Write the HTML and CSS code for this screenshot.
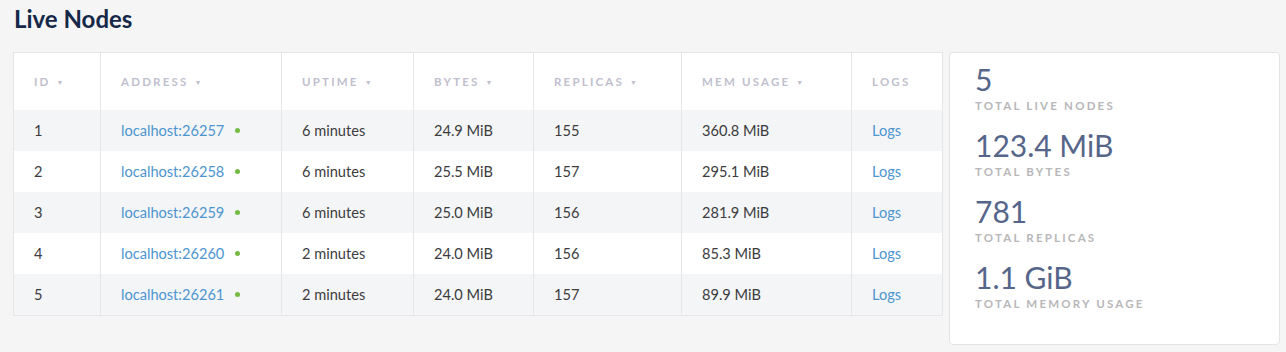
FILE: index.html
```html
<!DOCTYPE html>
<html>
<head>
<meta charset="utf-8">
<link rel="stylesheet" href="styles.css">
</head>
<body>
<div class="page">
  <h1 class="title">Live Nodes</h1>
  <div class="content">
    <table class="nodes">
      <thead>
        <tr>
          <th class="c-id">ID <span class="arrow">▼</span></th>
          <th class="c-addr">Address <span class="arrow">▼</span></th>
          <th class="c-up">Uptime <span class="arrow">▼</span></th>
          <th class="c-bytes">Bytes <span class="arrow">▼</span></th>
          <th class="c-rep">Replicas <span class="arrow">▼</span></th>
          <th class="c-mem">Mem Usage <span class="arrow">▼</span></th>
          <th class="c-logs">Logs</th>
        </tr>
      </thead>
      <tbody>
        <tr class="odd"><td>1</td><td><a class="link">localhost:26257</a><span class="dot"></span></td><td>6 minutes</td><td>24.9 MiB</td><td>155</td><td>360.8 MiB</td><td><a class="link">Logs</a></td></tr>
        <tr><td>2</td><td><a class="link">localhost:26258</a><span class="dot"></span></td><td>6 minutes</td><td>25.5 MiB</td><td>157</td><td>295.1 MiB</td><td><a class="link">Logs</a></td></tr>
        <tr class="odd"><td>3</td><td><a class="link">localhost:26259</a><span class="dot"></span></td><td>6 minutes</td><td>25.0 MiB</td><td>156</td><td>281.9 MiB</td><td><a class="link">Logs</a></td></tr>
        <tr><td>4</td><td><a class="link">localhost:26260</a><span class="dot"></span></td><td>2 minutes</td><td>24.0 MiB</td><td>156</td><td>85.3 MiB</td><td><a class="link">Logs</a></td></tr>
        <tr class="odd"><td>5</td><td><a class="link">localhost:26261</a><span class="dot"></span></td><td>2 minutes</td><td>24.0 MiB</td><td>157</td><td>89.9 MiB</td><td><a class="link">Logs</a></td></tr>
      </tbody>
    </table>
    <div class="summary">
      <div class="stat"><div class="value">5</div><div class="label">Total Live Nodes</div></div>
      <div class="stat"><div class="value">123.4 MiB</div><div class="label">Total Bytes</div></div>
      <div class="stat"><div class="value">781</div><div class="label">Total Replicas</div></div>
      <div class="stat"><div class="value">1.1 GiB</div><div class="label">Total Memory Usage</div></div>
    </div>
  </div>
</div>
</body>
</html>
```
FILE: styles.css
```css
html, body {
  margin: 0;
  padding: 0;
  background: #f5f5f6;
  font-family: Lato, "Open Sans", sans-serif;
}
.page {
  padding: 5px 6px 0 13px;
}
.title {
  margin: 0 0 0 1px;
  font-size: 24px;
  line-height: 28px;
  font-weight: 700;
  color: #152849;
}
.content {
  display: flex;
  align-items: flex-start;
  gap: 6px;
  margin-top: 19px;
}
.nodes {
  width: 930px;
  border-collapse: collapse;
  background: #fff;
  border: 1px solid #e6e6e9;
  table-layout: fixed;
}
.nodes th, .nodes td {
  border-left: 1px solid #e6e6e9;
  border-right: 1px solid #e6e6e9;
  text-align: left;
  padding: 0 0 0 20px;
  white-space: nowrap;
}
.nodes th {
  height: 57px;
  font-size: 11.5px;
  font-weight: 700;
  letter-spacing: 2.2px;
  text-transform: uppercase;
  color: #c0bfcd;
}
.arrow {
  font-size: 7px;
  letter-spacing: 0;
  vertical-align: 1px;
  margin-left: 1px;
}
.c-id { width: 66px; }
.c-addr { width: 160px; }
.c-up { width: 111px; }
.c-bytes { width: 99px; }
.c-rep { width: 127px; }
.c-mem { width: 149px; }
.nodes td {
  height: 41px;
  font-size: 14.6px;
  color: #3c3c3e;
}
.nodes tr.odd td {
  background: #f4f5f7;
}
.link {
  color: #4d95cf;
  text-decoration: none;
}
.dot {
  display: inline-block;
  width: 5px;
  height: 5px;
  border-radius: 50%;
  background: #74ba43;
  margin-left: 11px;
  vertical-align: 3px;
}
.summary {
  background: #fff;
  border: 1px solid #e4e4e6;
  border-radius: 4px;
  padding: 9px 0 0 25px;
  box-sizing: border-box;
  height: 293px;
  width: 331px;
}
.stat {
  height: 66px;
}
.value {
  font-size: 30px;
  line-height: 34px;
  color: #56668a;
}
.label {
  font-size: 11.5px;
  font-weight: 700;
  letter-spacing: 2.2px;
  text-transform: uppercase;
  color: #b7b7b9;
  line-height: 14px;
  margin-top: 3px;
}
```
